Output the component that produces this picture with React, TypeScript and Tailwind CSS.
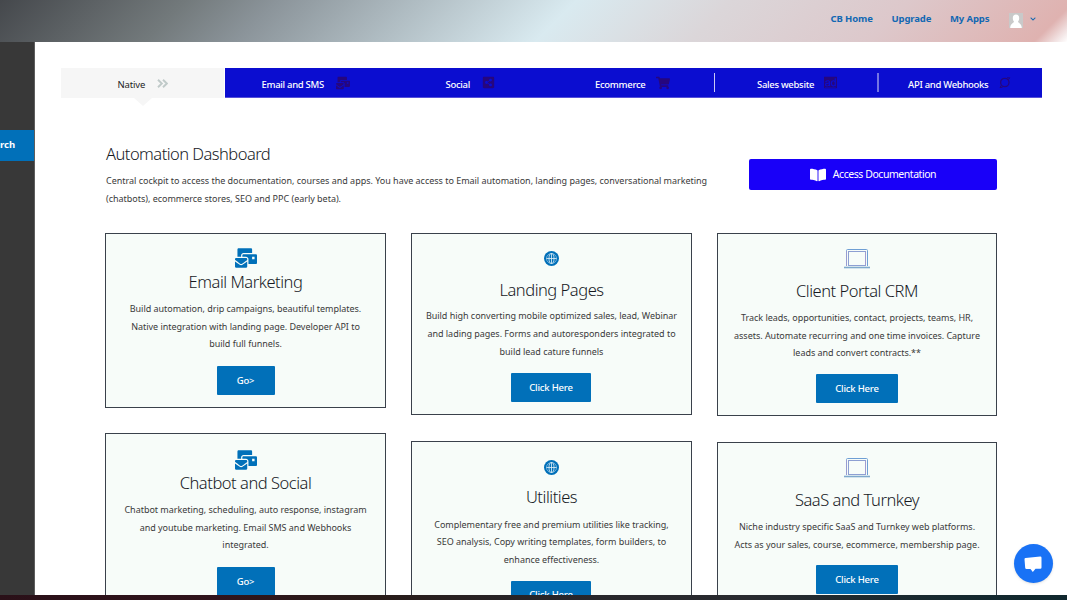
import React from "react";
import { FaMailBulk, FaShoppingCart, FaShareAltSquare, FaBookOpen, FaAdversal, FaChevronDown } from "react-icons/fa";

type CardProps = {
  title: string;
  icon: "mail" | "globe" | "laptop";
  lines: string[];
  button: string;
  box: string;
  iconBox: string;
  textClass: string;
  buttonClass: string;
};

function Laptop() {
  return (
    <svg width="26" height="20" viewBox="0 0 26 20" fill="none">
      <path d="M2.5 17V1.5a1 1 0 0 1 1-1h19a1 1 0 0 1 1 1V17" stroke="#6f9fd4" />
      <rect x="4.500" y="2.500" width="17" height="14" stroke="#8d9fd2" />
      <path d="M2.500 2v15M21.500 3v13" stroke="#a99bd0" strokeOpacity="0.7" />
      <path d="M0 18.500h26" stroke="#7fa9cc" strokeWidth="1.600" />
    </svg>
  );
}

function Globe() {
  return (
    <svg width="15" height="15" viewBox="0 0 15 15" fill="none">
      <circle cx="7.500" cy="7.500" r="7.500" fill="#0170b9" />
      <g stroke="#e4f1f8" strokeWidth="0.800">
        <ellipse cx="7.500" cy="7.500" rx="2.500" ry="5" />
        <circle cx="7.500" cy="7.500" r="5" strokeOpacity="0.6" />
        <path d="M2.500 7.500h10M7.500 2.500v10" />
      </g>
    </svg>
  );
}

function Card(p: CardProps) {
  return (
    <section className={`flex shrink-0 flex-col items-center border border-[#3a414b] bg-[#f7fcf9] ${p.box}`}>
      <div className={`flex shrink-0 items-start justify-center text-[#0170b9] ${p.iconBox}`}>
        {p.icon === "mail" && <FaMailBulk size={22} />}
        {p.icon === "globe" && <Globe />}
        {p.icon === "laptop" && <Laptop />}
      </div>
      <h2 className="h-[22px] shrink-0 text-[16.500px] leading-[22px] font-light tracking-[-0.47px] whitespace-nowrap text-[#16191f]">{p.title}</h2>
      <div className={`shrink-0 text-center text-[9px] tracking-[-0.03px] text-[#3a3a3a] ${p.textClass}`}>
        {p.lines.map((l) => (
          <p key={l} className="whitespace-nowrap">{l}</p>
        ))}
      </div>
      <button className={`flex h-[29px] shrink-0 items-center justify-center rounded-[1px] bg-[#0170b9] pt-px text-[9.500px] font-medium tracking-[-0.2px] text-white ${p.buttonClass}`}>{p.button}</button>
    </section>
  );
}

function Tab({ label, labelClass, icon, className }: { label: string; labelClass: string; icon: React.ReactNode; className: string }) {
  return (
    <div className={`flex h-full shrink-0 items-center ${className}`}>
      <span className={`mt-[5px] shrink-0 text-[9.500px] font-medium tracking-[-0.3px] whitespace-nowrap text-white ${labelClass}`}>{label}</span>
      <span className="ml-[11px] shrink-0 text-[#26067e]">{icon}</span>
    </div>
  );
}

export default function App() {
  return (
    <div className="relative flex h-[600px] w-[1067px] flex-col overflow-hidden bg-white font-['Noto_Sans','Open_Sans',sans-serif]">
      <header className="flex h-[42px] shrink-0 items-start bg-[linear-gradient(135deg,#45484c_0%,#737a7c_17%,#8b949a_25%,#d9eaf0_52%,#dbd6d9_66%,#ddc8cb_82%,#dfb2b0_97%,#f3e6e6_99%,#fff_100%)] text-[9.500px] font-bold tracking-[-0.12px] text-[#1268b3]">
        <nav className="flex h-[38px] items-center pl-[830.500px]">
          <a className="w-[61px] whitespace-nowrap">CB Home</a>
          <a className="w-[58.500px] whitespace-nowrap">Upgrade</a>
          <a className="w-[59px] whitespace-nowrap">My Apps</a>
          <svg className="mt-[2px]" width="14" height="15" viewBox="0 0 14 15">
            <rect width="14" height="15" fill="#c9c9c9" />
            <path d="M7 1.500c2 0 3.200 1.400 3.200 3.500 0 1.800-.6 2.900-1.200 3.600 0 1.600 3.500 1.600 3.800 6.400H1.200C1.500 10.200 5 10.200 5 8.600 4.400 7.900 3.800 6.800 3.800 5 3.800 2.900 5 1.500 7 1.500z" fill="#fff" />
          </svg>
          <FaChevronDown size={6} className="ml-[7px]" />
        </nav>
      </header>

      <div className="flex h-[553px] shrink-0 overflow-hidden">
        <aside className="h-full w-[35px] shrink-0 border-r border-[#5d5d5d] bg-[#383838] pt-[88px]">
          <div className="flex h-[31px] w-[34px] items-center bg-[#0170b9] text-[9.500px] font-bold text-white">rch</div>
        </aside>

        <main className="flex w-[1032px] shrink-0 flex-col">
          <div className="mt-[26px] ml-[26px] flex h-[30px] w-[981px] shrink-0">
            <div className="relative flex h-full w-[163px] shrink-0 items-center bg-[#f6f6f6] pl-[56.500px]">
              <span className="mt-[5px] w-[27.500px] text-[9.500px] tracking-[-0.15px] text-[#1d1d1d]">Native</span>
              <svg className="ml-[12px]" width="11" height="9" viewBox="0 0 11 9" fill="none" stroke="#c0cac9" strokeWidth="1.900">
                <path d="M1 .8 4.800 4.500 1 8.200M6 .8 9.800 4.500 6 8.200" />
              </svg>
              <svg className="absolute top-[30px] left-[73px]" width="18" height="8" viewBox="0 0 18 8">
                <path d="M0 0h18L9 8z" fill="#f6f6f6" />
              </svg>
            </div>
            <div className="ml-px flex h-full w-[817px] shrink-0 items-center border-b border-[#5650d8] bg-[#0b0dd0]">
              <Tab label="Email and SMS" labelClass="w-[63px]" icon={<FaMailBulk size={14} />} className="w-[163px] pl-[36.500px]" />
              <Tab label="Social" labelClass="w-[25px]" icon={<FaShareAltSquare size={13} />} className="w-[163px] pl-[57.500px]" />
              <Tab label="Ecommerce" labelClass="w-[50px]" icon={<FaShoppingCart size={14} />} className="w-[163px] pl-[44px]" />
              <div className="h-[19px] w-px shrink-0 bg-[#c9c9f5]" />
              <Tab label="Sales website" labelClass="w-[56px]" icon={<FaAdversal size={13} />} className="w-[162px] pl-[42px]" />
              <div className="h-[19px] w-[2px] shrink-0 bg-[#7475e3]" />
              <Tab
                label="API and Webhooks"
                labelClass="w-[80px]"
                icon={
                  <svg width="12" height="13" viewBox="0 0 12 13" fill="none" stroke="currentColor" strokeWidth="1.300">
                    <circle cx="5.800" cy="6.500" r="4.200" />
                    <path d="M8 1.800H10.800L9.400 3.700M3.600 11.200 1 11.600 2.200 9.300" strokeWidth="1" />
                  </svg>
                }
                className="w-[163px] pl-[29px]"
              />
            </div>
          </div>

          <div className="mt-[44px] ml-[71px] flex h-[90px] shrink-0">
            <div className="w-[643px] shrink-0">
              <h1 className="h-[24px] text-[16.500px] leading-[24px] font-light tracking-[-0.53px] whitespace-nowrap text-[#16191f]">Automation Dashboard</h1>
              <div className="mt-[6px] text-[9px] leading-[18px] tracking-[-0.02px] whitespace-nowrap text-[#3a3a3a]">
                <p>Central cockpit to access the documentation, courses and apps. You have access to Email automation, landing pages, conversational marketing</p>
                <p>(chatbots), ecommerce stores, SEO and PPC (early beta).</p>
              </div>
            </div>
            <button className="mt-[17px] flex h-[31px] w-[248px] shrink-0 items-center justify-center gap-[7px] rounded-[2px] bg-[#1900f8] text-[10.500px] tracking-[-0.45px] text-white">
              <FaBookOpen size={16} />
              <span className="whitespace-nowrap">Access Documentation</span>
            </button>
          </div>

          <div className="mt-px ml-[70px] flex shrink-0 items-start gap-[25px]">
            <div className="flex w-[281px] flex-col gap-[25px]">
              <Card icon="mail" title="Email Marketing" box="h-[175px]" iconBox="h-[37px] pt-[13px]" textClass="mt-[7px] leading-[17.600px]"
                lines={["Build automation, drip campaigns, beautiful templates.", "Native integration with landing page. Developer API to", "build full funnels."]}
                button="Go>" buttonClass="mt-[13px] w-[58px]" />
              <Card icon="mail" title="Chatbot and Social" box="h-[175px]" iconBox="h-[38px] pt-[15px]" textClass="mt-[7px] leading-[17.600px]"
                lines={["Chatbot marketing, scheduling, auto response, instagram", "and youtube marketing. Email SMS and Webhooks", "integrated."]}
                button="Go>" buttonClass="mt-[13px] w-[58px]" />
            </div>
            <div className="flex w-[281px] flex-col gap-[26px]">
              <Card icon="globe" title="Landing Pages" box="h-[182px]" iconBox="h-[45px] pt-[17px]" textClass="mt-[6px] leading-[17.800px]"
                lines={["Build high converting mobile optimized sales, lead, Webinar", "and lading pages. Forms and autoresponders integrated to", "build lead cature funnels"]}
                button="Click Here" buttonClass="mt-[13px] mr-px w-[80px]" />
              <Card icon="globe" title="Utilities" box="h-[182px]" iconBox="h-[44px] pt-[18px]" textClass="mt-[7.500px] leading-[17.900px]"
                lines={["Complementary free and premium utilities like tracking,", "SEO analysis, Copy writing templates, form builders, to", "enhance effectiveness."]}
                button="Click Here" buttonClass="mt-[11.300px] mr-px w-[80px]" />
            </div>
            <div className="flex w-[280px] flex-col gap-[26px]">
              <Card icon="laptop" title="Client Portal CRM" box="h-[183px]" iconBox="h-[46px] pt-[15px]" textClass="mt-[7px] leading-[17.600px]"
                lines={["Track leads, opportunities, contact, projects, teams, HR,", "assets. Automate recurring and one time invoices. Capture", "leads and convert contracts.**"]}
                button="Click Here" buttonClass="mt-[12px] w-[82px]" />
              <Card icon="laptop" title="SaaS and Turnkey" box="h-[183px]" iconBox="h-[46px] pt-[15px]" textClass="mt-[6.500px] leading-[18px]"
                lines={["Niche industry specific SaaS and Turnkey web platforms.", "Acts as your sales, course, ecommerce, membership page."]}
                button="Click Here" buttonClass="mt-[11.500px] w-[82px]" />
            </div>
          </div>
        </main>
      </div>

      <footer className="h-[5px] shrink-0 bg-[linear-gradient(90deg,#2a1018_0%,#30141c_20%,#291c19_35%,#272529_50%,#292b30_70%,#15292f_90%,#10282e_100%)]" />

      <button className="absolute top-[544px] left-[1014px] flex h-[39px] w-[39px] items-center justify-center rounded-full bg-[#1972f5] pr-[2px] shadow-sm">
        <svg width="20" height="18" viewBox="0 0 20 18" fill="#fff">
          <path d="M2.500 3 17.300 1.500q1.200 0 1.200 1.200V12.500q0 1.200-1.200 1.200H12.500L9.800 17 7.500 14H3.500Q2.300 14 2.200 12.800L1.500 4.200Q1.500 3.100 2.500 3z" />
        </svg>
      </button>
    </div>
  );
}
